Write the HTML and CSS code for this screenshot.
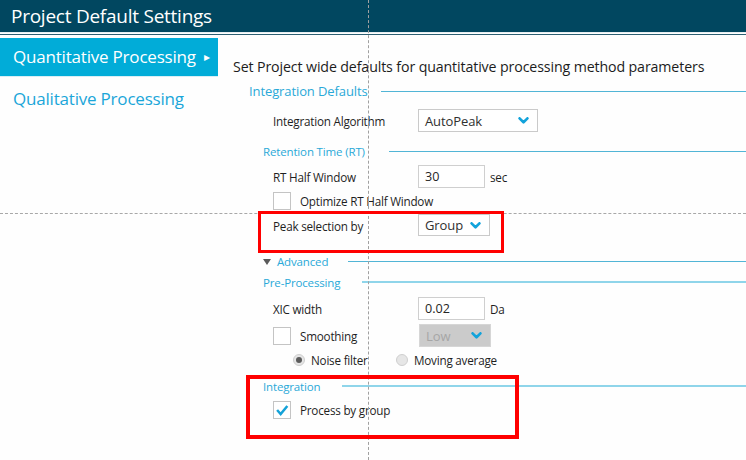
FILE: index.html
```html
<!DOCTYPE html>
<html>
<head>
<meta charset="utf-8">
<link rel="stylesheet" href="styles.css">
</head>
<body>
<header class="titlebar"><h1 class="title">Project Default Settings</h1></header>
<div class="rule"></div>
<div class="main">
  <nav class="sidebar">
    <div class="nav-item active">Quantitative Processing <span class="caret">&#9656;</span></div>
    <div class="nav-item">Qualitative Processing</div>
  </nav>
  <section class="content">
    <p class="desc">Set Project wide defaults for quantitative processing method parameters</p>

    <div class="sec sec-top"><span class="sec-title">Integration Defaults</span><span class="sec-line"></span></div>
    <div class="row r-alg">
      <span class="label">Integration Algorithm</span>
      <div class="select w120"><span>AutoPeak</span><svg class="chev" viewBox="0 0 12 8"><polyline points="1.5,1.5 6,6 10.5,1.5"/></svg></div>
    </div>

    <div class="sec sub s-rt"><span class="sec-title">Retention Time (RT)</span><span class="sec-line"></span></div>
    <div class="row r-rt">
      <span class="label">RT Half Window</span>
      <div class="input">30</div><span class="unit">sec</span>
    </div>
    <div class="row r-opt">
      <span class="check"></span><span class="check-label">Optimize RT Half Window</span>
    </div>
    <div class="row r-peak">
      <span class="label">Peak selection by</span>
      <div class="select w72"><span>Group</span><svg class="chev" viewBox="0 0 12 8"><polyline points="1.5,1.5 6,6 10.5,1.5"/></svg></div>
    </div>

    <div class="sec sub s-adv"><span class="tri"></span><span class="sec-title">Advanced</span><span class="sec-line"></span></div>
    <div class="sec sub s-pre"><span class="sec-title">Pre-Processing</span><span class="sec-line thick"></span></div>
    <div class="row r-xic">
      <span class="label">XIC width</span>
      <div class="input">0.02</div><span class="unit">Da</span>
    </div>
    <div class="row r-smooth">
      <span class="check"></span><span class="check-label smooth-label">Smoothing</span>
      <div class="select w72 disabled"><span>Low</span><svg class="chev" viewBox="0 0 12 8"><polyline points="1.5,1.5 6,6 10.5,1.5"/></svg></div>
    </div>
    <div class="row r-radio">
      <span class="radio on"></span><span class="radio-label first">Noise filter</span>
      <span class="radio"></span><span class="radio-label">Moving average</span>
    </div>

    <div class="sec sub s-int"><span class="sec-title">Integration</span><span class="sec-line thick"></span></div>
    <div class="row r-proc">
      <span class="check"><svg viewBox="0 0 18 18"><polyline points="3.5,9 7.5,13.5 15,4.5"/></svg></span><span class="check-label">Process by group</span>
    </div>
  </section>
</div>

<div class="guide guide-v"></div>
<div class="guide guide-h"></div>
<div class="mark mark-1"></div>
<div class="mark mark-2"></div>
</body>
</html>
```

FILE: styles.css
```css
* { box-sizing: border-box; }
html, body { margin: 0; padding: 0; }
body {
  width: 746px;
  height: 460px;
  overflow: hidden;
  background: #fefefe;
  font-family: "Open Sans", "Noto Sans", sans-serif;
  color: #262626;
  position: relative;
}
.titlebar {
  height: 32px;
  background: #014760;
  padding-left: 11px;
}
.title {
  margin: 0;
  font-weight: 400;
  font-size: 19px;
  line-height: 32px;
  color: #ffffff;
  letter-spacing: -0.25px;
}
.rule {
  height: 3px;
  border-top: 1px solid #e6eef1;
  border-bottom: 1px solid #2d5f72;
}
.main { display: flex; }
.sidebar {
  width: 218px;
  flex: none;
  padding-top: 3px;
}
.nav-item {
  height: 38px;
  line-height: 38px;
  padding-left: 13px;
  font-size: 17px;
  color: #1ba6d9;
  letter-spacing: -0.2px;
}
.nav-item.active {
  background: #01acd8;
  color: #ffffff;
  border-bottom: 1px solid #d8eef5;
  height: 39px;
}
.caret { font-size: 12px; margin-left: 4px; vertical-align: 2px; }
.nav-item + .nav-item { margin-top: 3px; height: 38px; line-height: 37px; }

.content {
  flex: 1;
  padding-left: 15px;
  padding-top: 22px;
}
.desc {
  margin: 0;
  height: 20px;
  line-height: 20px;
  font-size: 14.2px;
  color: #1c1c1c;
  letter-spacing: -0.12px;
}
.sec {
  display: flex;
  align-items: center;
  height: 20px;
  font-size: 11.5px;
  letter-spacing: -0.15px;
  color: #2aa9d8;
}
.sec-top { margin-top: 4px; padding-left: 16px; font-size: 13px; letter-spacing: -0.1px; }
.sec-top .sec-line { margin-left: 13px; }
.sub { padding-left: 30px; }
.sec-line {
  flex: 1;
  height: 1px;
  background: #52b5d6;
  margin-left: 22px;
}
.sec-line.thick { height: 2px; background: #8fd5ea; }
.s-rt { margin-top: 9px; }
.s-rt .sec-line { margin-left: 24px; }
.s-adv { margin-top: 14px; }
.s-adv .sec-line { margin-left: 20px; }
.s-pre { margin-top: 1px; }
.s-int { margin-top: 7px; }
.tri {
  width: 0; height: 0;
  border-left: 4.5px solid transparent;
  border-right: 4.5px solid transparent;
  border-top: 6px solid #5a5a5a;
  margin-right: 6px;
  margin-top: 1px;
}

.row {
  display: flex;
  align-items: center;
  padding-left: 40px;
  font-size: 11.7px;
  letter-spacing: -0.22px;
  color: #1f1f1f;
}
.label { width: 145px; flex: none; }
.r-alg { margin-top: 8px; height: 23px; }
.r-rt { margin-top: 4px; height: 23px; }
.r-opt { margin-top: 4px; height: 18px; }
.r-peak { margin-top: 4px; height: 23px; align-items: flex-start; }
.r-peak .label { line-height: 22px; margin-top: 1px; }
.r-xic { margin-top: 5px; height: 23px; }
.r-smooth { margin-top: 4px; height: 23px; }
.r-radio { margin-top: 4px; height: 18px; padding-left: 60px; }
.r-proc { margin-top: 5px; height: 18px; }

.select {
  height: 23px;
  border: 1px solid #cacaca;
  background: #fff;
  display: flex;
  align-items: center;
  justify-content: space-between;
  padding: 0 8px 0 6px;
  font-size: 13px;
  letter-spacing: -0.1px;
  color: #303030;
}
.w120 { width: 120px; }
.w72 { width: 72px; }
.r-peak .select { height: 22px; }
.chev { width: 11px; height: 7px; }
.chev polyline { fill: none; stroke: #12a3db; stroke-width: 3; stroke-linecap: round; stroke-linejoin: round; }
.select.disabled { background: #cbcbcb; border-color: #d6d6d6; color: #a6a6a6; }

.input {
  width: 67px;
  height: 23px;
  border: 1px solid #cfcfcf;
  background: #fff;
  padding-left: 6px;
  line-height: 21px;
  font-size: 12.6px;
  letter-spacing: 0;
  color: #262626;
}
.unit { margin-left: 5px; }

.check {
  width: 18px;
  height: 18px;
  flex: none;
  border: 1px solid #c4c4c4;
  background: #fff;
  display: block;
}
.check svg { width: 16px; height: 16px; display: block; }
.check polyline { fill: none; stroke: #14a2d8; stroke-width: 2.8; }
.check-label { margin-left: 9px; }
.smooth-label { width: 119px; flex: none; }

.radio {
  width: 12px;
  height: 12px;
  flex: none;
  border-radius: 50%;
  border: 1px solid #cfcfcf;
  background: #e6e6e6;
  position: relative;
}
.radio.on::after {
  content: "";
  position: absolute;
  left: 2px; top: 2px;
  width: 6px; height: 6px;
  border-radius: 50%;
  background: #5c5c5c;
}
.radio-label { margin-left: 6px; }
.radio-label.first { width: 85px; flex: none; }

.guide { position: absolute; pointer-events: none; }
.guide-v {
  left: 368px; top: 0;
  width: 0; height: 460px;
  border-left: 1px dashed #a0a0a0;
}
.guide-h {
  left: 0; top: 213px;
  width: 746px; height: 0;
  border-top: 1px dashed #a8a8a8;
}
.mark { position: absolute; border: 3px solid #ff0000; }
.mark-1 { left: 258px; top: 211px; width: 246px; height: 42px; }
.mark-2 { left: 246px; top: 375px; width: 273px; height: 64px; border-width: 4px; }
```
